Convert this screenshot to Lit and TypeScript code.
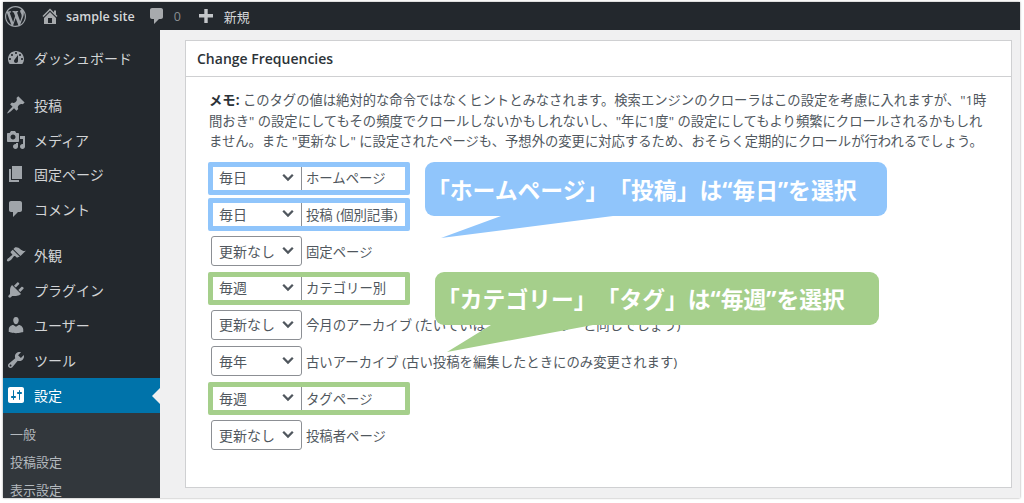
import { LitElement, html, css, svg } from "lit";
import { customElement } from "lit/decorators.js";

const ICONS: Record<string, string> = {
  wp: "M20 10c0-5.51-4.49-10-10-10C4.48 0 0 4.49 0 10c0 5.52 4.48 10 10 10 5.51 0 10-4.48 10-10zM7.78 15.37L4.37 6.22c.55-.02 1.17-.08 1.17-.08.5-.06.44-1.13-.06-1.11 0 0-1.45.11-2.37.11-.18 0-.37 0-.58-.01C4.12 2.69 6.87 1.11 10 1.11c2.33 0 4.45.87 6.05 2.34-.68-.11-1.65.39-1.65 1.58 0 .74.45 1.36.9 2.1.35.61.55 1.36.55 2.46 0 1.49-1.4 5-1.4 5l-3.03-8.37c.54-.02.82-.17.82-.17.5-.05.44-1.25-.06-1.22 0 0-1.44.12-2.38.12-.87 0-2.33-.12-2.33-.12-.5-.03-.56 1.2-.06 1.22l.92.08 1.26 3.41zM17.41 10c.24-.64.74-1.87.43-4.25.7 1.29 1.05 2.71 1.05 4.25 0 3.29-1.73 6.24-4.4 7.78.97-2.59 1.94-5.2 2.92-7.78zM6.1 18.09C3.12 16.65 1.11 13.53 1.11 10c0-1.3.23-2.48.72-3.59C3.25 10.3 4.67 14.2 6.1 18.09zm4.03-6.63l2.58 6.98c-.86.29-1.76.45-2.71.45-.79 0-1.57-.11-2.29-.33.81-2.38 1.62-4.74 2.42-7.1z",
  home: "M16 8.5l1.53 1.53-1.06 1.06L10 4.62l-6.47 6.47-1.06-1.06L10 2.5l4 4v-2h2v4zm-6-2.46l6 5.99V18H4v-5.97zM12 17v-5H8v5h4z",
  comment: "M5 2h9c1.1 0 2 .9 2 2v7c0 1.1-.9 2-2 2h-2l-5 5v-5H5c-1.1 0-2-.9-2-2V4c0-1.1.9-2 2-2z",
  plus: "M17 8v3.4h-5.3V17H8.3v-5.6H3V8h5.3V3h3.4v5z",
  dashboard: "M3.76 16h12.48c1.1-1.37 1.76-3.11 1.76-5 0-4.42-3.58-8-8-8s-8 3.58-8 8c0 1.89.66 3.63 1.76 5zM10 4c.55 0 1 .45 1 1s-.45 1-1 1-1-.45-1-1 .45-1 1-1zM6 6c.55 0 1 .45 1 1s-.45 1-1 1-1-.45-1-1 .45-1 1-1zm8 0c.55 0 1 .45 1 1s-.45 1-1 1-1-.45-1-1 .45-1 1-1zm-5.37 5.55L12 7v6c0 1.1-.9 2-2 2s-2-.9-2-2c0-.57.24-1.08.63-1.45zM4 10c.55 0 1 .45 1 1s-.45 1-1 1-1-.45-1-1 .45-1 1-1zm12 0c.55 0 1 .45 1 1s-.45 1-1 1-1-.45-1-1 .45-1 1-1z",
  pin: "M10.44 3.02l1.82-1.82 6.36 6.35-1.83 1.82c-1.05-.68-2.48-.57-3.41.36l-.75.75c-.92.93-1.04 2.35-.35 3.41l-1.83 1.82-2.41-2.41-2.8 2.79c-.42.42-3.38 2.71-3.8 2.29s1.86-3.39 2.28-3.81l2.79-2.79L4.1 9.36l1.83-1.82c1.05.69 2.48.57 3.4-.36l.75-.75c.93-.92 1.05-2.35.36-3.41z",
  media: "M13 11V4c0-.55-.45-1-1-1h-1.67L9 1H5L3.67 3H2c-.55 0-1 .45-1 1v7c0 .55.45 1 1 1h10c.55 0 1-.45 1-1zM7 4.5c1.38 0 2.5 1.12 2.5 2.5S8.38 9.5 7 9.5 4.5 8.38 4.5 7 5.62 4.5 7 4.5zM14 6h5v10.5c0 1.38-1.12 2.5-2.5 2.5S14 17.88 14 16.5s1.12-2.5 2.5-2.5c.17 0 .34.02.5.05V9h-3V6zm-4 8.05V13h2v3.5c0 1.38-1.12 2.5-2.5 2.5S7 17.88 7 16.5 8.12 14 9.5 14c.17 0 .34.02.5.05z",
  page: "M6 15V2h10v13H6zm-1 1h8v2H3V5h2v11z",
  brush: "M14.48 11.06L7.41 3.99l1.5-1.5c.5-.56 2.3-.47 3.51.32 1.21.8 1.43 1.28 2.91 2.1 1.18.64 2.45 1.26 4.45.85zm-.71.71L6.7 4.7 4.93 6.47c-.39.39-.39 1.02 0 1.41l1.06 1.06c.39.39.39 1.03 0 1.42-.6.6-1.43 1.11-2.21 1.69-.35.26-.7.53-1.01.84C1.43 13.23.4 15.3 1.2 16.1c.81.8 2.87-.23 4.2-1.56.31-.31.58-.66.84-1.02.57-.78 1.08-1.61 1.69-2.21.39-.39 1.02-.39 1.41 0l1.06 1.06c.39.39 1.02.39 1.41 0z",
  plugin: "M13.11 4.36L9.87 7.6 8 5.73l3.24-3.24c.35-.34 1.05-.2 1.56.32.52.51.66 1.21.31 1.55zm-8 1.77l.91-1.12 9.01 9.01-1.19.84c-.71.71-2.63 1.16-3.82 1.16H6.14L4.9 17.26c-.59.59-1.54.59-2.12 0-.59-.58-.59-1.53 0-2.12l1.24-1.24v-3.88c0-1.13.4-3.19 1.09-3.89zm7.26 3.97l3.24-3.24c.34-.35 1.04-.21 1.55.31.52.51.66 1.21.31 1.55l-3.24 3.25z",
  user: "M10 9.25c-2.27 0-2.73-3.44-2.73-3.44C7 4.02 7.82 2 9.97 2c2.16 0 2.98 2.02 2.71 3.81 0 0-.41 3.44-2.68 3.44zm0 2.57L12.72 10c2.39 0 4.52 2.33 4.52 4.53v2.49s-3.65 1.13-7.24 1.13c-3.65 0-7.24-1.13-7.24-1.13v-2.49c0-2.25 1.94-4.48 4.47-4.48z",
  tools: "M16.68 9.77c-1.34 1.34-3.3 1.67-4.95.99l-5.41 6.52c-.99.99-2.59.99-3.58 0s-.99-2.59 0-3.57l6.52-5.42c-.68-1.65-.35-3.61.99-4.95 1.28-1.28 3.12-1.62 4.72-1.06l-2.89 2.89 2.82 2.82 2.86-2.87c.53 1.58.18 3.39-1.08 4.65zM3.81 16.21c.4.39 1.04.39 1.43 0 .4-.4.4-1.04 0-1.43-.39-.4-1.03-.4-1.43 0-.39.39-.39 1.03 0 1.43z",
  settings: "M18 16V4c0-1.1-.9-2-2-2H4c-1.1 0-2 .9-2 2v12c0 1.1.9 2 2 2h12c1.1 0 2-.9 2-2zM8 11h1c.55 0 1 .45 1 1s-.45 1-1 1H8v1.5c0 .28-.22.5-.5.5s-.5-.22-.5-.5V13H6c-.55 0-1-.45-1-1s.45-1 1-1h1V5.5c0-.28.22-.5.5-.5s.5.22.5.5V11zm5-2h-1c-.55 0-1-.45-1-1s.45-1 1-1h1V5.5c0-.28.22-.5.5-.5s.5.22.5.5V7h1c.55 0 1 .45 1 1s-.45 1-1 1h-1v5.5c0 .28-.22.5-.5.5s-.5-.22-.5-.5V9z",
};

const icon = (name: string, size: number) => html`<svg class="ic" width=${size} height=${size} viewBox="0 0 20 20" fill="currentColor" fill-rule="evenodd">${svg`<path d=${ICONS[name]}></path>`}</svg>`;

const MENU: { icon: string; label: string; gap?: boolean; current?: boolean }[] = [
  { icon: "dashboard", label: "ダッシュボード" },
  { icon: "pin", label: "投稿", gap: true },
  { icon: "media", label: "メディア" },
  { icon: "page", label: "固定ページ" },
  { icon: "comment", label: "コメント" },
  { icon: "brush", label: "外観", gap: true },
  { icon: "plugin", label: "プラグイン" },
  { icon: "user", label: "ユーザー" },
  { icon: "tools", label: "ツール" },
  { icon: "settings", label: "設定", current: true },
];
const SUB = ["一般", "投稿設定", "表示設定"];

const OPTIONS = ["毎日", "毎週", "毎年", "更新なし"];
const ROWS: { value: string; label: string; mark?: string }[] = [
  { value: "毎日", label: "ホームページ", mark: "blue" },
  { value: "毎日", label: "投稿 (個別記事)", mark: "blue" },
  { value: "更新なし", label: "固定ページ" },
  { value: "毎週", label: "カテゴリー別", mark: "green" },
  { value: "更新なし", label: "今月のアーカイブ (たいていは \"ホームページ\" と同じでしょう)" },
  { value: "毎年", label: "古いアーカイブ (古い投稿を編集したときにのみ変更されます)" },
  { value: "毎週", label: "タグページ", mark: "green" },
  { value: "更新なし", label: "投稿者ページ" },
];

@customElement("app-root")
export class AppRoot extends LitElement {
  static styles = css`
    :host {
      display: block;
      width: 1024px;
      height: 503px;
      background: #fff;
      overflow: hidden;
      font-family: "Open Sans", "Noto Sans CJK JP", sans-serif;
      text-spacing-trim: space-all;
    }
    .frame {
      box-sizing: border-box;
      height: 496px;
      margin: 2px 4px 5px 3px;
      display: flex;
      flex-direction: column;
      overflow: hidden;
      box-shadow: 0 0 2px #9a9a9a;
    }
    .ic { display: block; flex: none; }
    .bar {
      height: 28px;
      flex: none;
      background: #23282d;
      color: #d5d7d9;
      display: flex;
      align-items: center;
      font-size: 12.5px;
      font-weight: 600;
    }
    .bar .logo { margin-left: 2px; color: #a0a5aa; }
    .bar .home { margin-left: 14px; color: #a7aaad; }
    .bar .site { margin-left: 6px; }
    .bar .cm { margin-left: 12px; color: #a7aaad; }
    .bar .cnt { margin-left: 7px; color: #8a8e92; font-weight: 400; }
    .bar .plus { margin-left: 15px; color: #c3c6c9; }
    .bar .new { margin-left: 8px; font-size: 13px; font-weight: 400; }
    .main { flex: 1; min-height: 0; display: flex; }
    .side {
      width: 157px;
      flex: none;
      background: #23282d;
      color: #d2d4d6;
      display: flex;
      flex-direction: column;
      padding-top: 11px;
      overflow: hidden;
    }
    .item {
      height: 34.9px;
      flex: none;
      display: flex;
      align-items: center;
      gap: 8px;
      padding-left: 3px;
      font-size: 14px;
      position: relative;
    }
    .item .ic { color: #a0a5aa; }
    .item.gap { margin-top: 11.3px; }
    .item.current { background: #0073aa; color: #fff; margin-top: 0; }
    .item.current .ic { color: #fff; }
    .item.current::after {
      content: "";
      position: absolute;
      right: 0;
      top: 10px;
      border: 8px solid transparent;
      border-left-width: 0;
      border-right-color: #f0f0f1;
    }
    .sub {
      flex: 1;
      min-height: 0;
      background: #32373c;
      padding: 13px 0 0 7px;
      color: #b4b9be;
      font-size: 13px;
      line-height: 16px;
      display: flex;
      flex-direction: column;
      gap: 12px;
    }
    .content {
      flex: 1;
      min-width: 0;
      background: #f0f0f1;
      display: flex;
      padding: 10px 8px 10px 25px;
    }
    .card {
      flex: 1;
      min-width: 0;
      background: #fff;
      border: 1px solid #cfd0d2;
      position: relative;
    }
    .card h2 {
      margin: 0;
      height: 36px;
      box-sizing: border-box;
      line-height: 36px;
      padding-left: 11px;
      font-size: 14px;
      font-weight: 600;
      color: #2c3338;
      border-bottom: 1px solid #cfd0d2;
    }
    .body { padding: 13px 23px 0; }
    .note {
      margin: 0 0 11px;
      font-size: 13.32px;
      line-height: 20.5px;
      color: #50575e;
      white-space: nowrap;
    }
    .note b { color: #2c3338; }
    .rows { display: flex; flex-direction: column; gap: 6.8px; }
    .row {
      position: relative;
      height: 30px;
      display: flex;
      align-items: center;
      gap: 4px;
      margin-left: 2px;
      font-size: 13.36px;
      color: #50575e;
      white-space: nowrap;
    }
    select {
      appearance: none;
      -webkit-appearance: none;
      width: 91px;
      height: 30px;
      box-sizing: border-box;
      flex: none;
      border: 1px solid #8c8f94;
      border-radius: 3px;
      padding: 0 0 0 7px;
      background: #fff url("data:image/svg+xml,%3Csvg xmlns='http://www.w3.org/2000/svg' width='20' height='20'%3E%3Cpath d='M3 7l2-2 5 5 5-5 2 2-7 7z' fill='%2350575e'/%3E%3C/svg%3E") no-repeat right 5px top 6px / 16px 16px;
      font: 14px "Open Sans", "Noto Sans CJK JP", sans-serif;
      color: #50575e;
    }
    .mark {
      position: absolute;
      left: -3px;
      top: -1px;
      width: 202px;
      height: 33px;
      box-sizing: border-box;
      border: 5.5px solid;
      border-radius: 2px;
      pointer-events: none;
    }
    .mark.blue { border-color: #90c5fb; }
    .mark.green { border-color: #a5cf8b; }
    .callout {
      position: absolute;
      box-sizing: border-box;
      padding-left: 2px;
      border-radius: 9px;
      color: #fff;
      font-weight: 700;
      font-size: 22.8px;
      display: flex;
      align-items: center;
      white-space: nowrap;
    }
    .callout svg { position: absolute; left: 0; top: 100%; display: block; }
    .callout.blue { left: 239px; top: 121px; width: 462px; height: 54px; background: #90c5fb; }
    .callout.green { left: 249px; top: 231px; width: 444px; height: 53px; background: #a5cf8b; }
  `;

  render() {
    return html`
      <div class="frame">
        <div class="bar">
          <span class="logo">${icon("wp", 21)}</span>
          <span class="home">${icon("home", 20)}</span>
          <span class="site">sample site</span>
          <span class="cm">${icon("comment", 20)}</span>
          <span class="cnt">0</span>
          <span class="plus">${icon("plus", 20)}</span>
          <span class="new">新規</span>
        </div>
        <div class="main">
          <nav class="side">
            ${MENU.map(
              (m) => html`<div class="item ${m.gap ? "gap" : ""} ${m.current ? "current" : ""}">
                ${icon(m.icon, 20)}<span>${m.label}</span>
              </div>`
            )}
            <div class="sub">${SUB.map((s) => html`<div>${s}</div>`)}</div>
          </nav>
          <div class="content">
            <section class="card">
              <h2>Change Frequencies</h2>
              <div class="body">
                <p class="note">
                  <b>メモ:</b> このタグの値は絶対的な命令ではなくヒントとみなされます。検索エンジンのクローラはこの設定を考慮に入れますが、"1時<br />間おき" の設定にしてもその頻度でクロールしないかもしれないし、"年に1度" の設定にしてもより頻繁にクロールされるかもしれ<br />ません。また "更新なし" に設定されたページも、予想外の変更に対応するため、おそらく定期的にクロールが行われるでしょう。
                </p>
                <div class="rows">
                  ${ROWS.map(
                    (r) => html`<div class="row">
                      <select>
                        ${OPTIONS.map((o) => html`<option ?selected=${o === r.value}>${o}</option>`)}
                      </select>
                      <span>${r.label}</span>
                      ${r.mark ? html`<div class="mark ${r.mark}"></div>` : ""}
                    </div>`
                  )}
                </div>
              </div>
              <div class="callout blue">
                <span>「ホームページ」「投稿」は“毎日”を選択</span>
                <svg width="200" height="22" viewBox="0 0 200 22"><path d="M76 0L16 22L188 0z" fill="#90c5fb"></path></svg>
              </div>
              <div class="callout green">
                <span>「カテゴリー」「タグ」は“毎週”を選択</span>
                <svg width="200" height="28" viewBox="0 0 200 28"><path d="M56 0L12 27L158 0z" fill="#a5cf8b"></path></svg>
              </div>
            </section>
          </div>
        </div>
      </div>
    `;
  }
}
